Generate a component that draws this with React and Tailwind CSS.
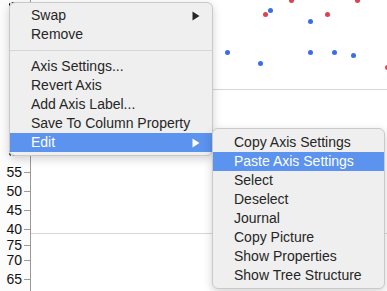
import React from 'react';

const dots = [
    { x: 291, y: 0, c: 'red' },
    { x: 265, y: 14, c: 'red' },
    { x: 270, y: 10, c: 'blue' },
    { x: 357, y: 0, c: 'red' },
    { x: 310, y: 21, c: 'blue' },
    { x: 327, y: 14, c: 'red' },
    { x: 227, y: 52, c: 'blue' },
    { x: 260, y: 63, c: 'blue' },
    { x: 310, y: 52, c: 'blue' },
    { x: 334, y: 52, c: 'blue' },
    { x: 353, y: 55, c: 'blue' },
    { x: 387, y: 67, c: 'red' },
];

const ticks = [
    { label: '55', y: 172 },
    { label: '50', y: 191 },
    { label: '45', y: 210 },
    { label: '40', y: 229 },
    { label: '75', y: 245 },
    { label: '70', y: 260 },
    { label: '65', y: 279 },
];

const Arrow = ({ color }) => (
    <svg width="8" height="10" viewBox="0 0 8 10" className="shrink-0">
        <path d="M0.5 0.5 L7.5 5 L0.5 9.5 Z" fill={color} />
    </svg>
);

const Row = ({ label, active, arrow }) => (
    <div className={`flex items-center justify-between h-[19px] pl-[21px] pr-[12px] ${active ? 'bg-[#5b93ee] text-white' : 'text-[#262626]'}`}>
        <span className="leading-[19px]">{label}</span>
        {arrow && <Arrow color={active ? '#ffffff' : '#262626'} />}
    </div>
);

export default function App() {
    return (
        <div className="relative w-[387px] h-[291px] overflow-hidden bg-white" style={{ fontFamily: '"Liberation Sans", Arial, sans-serif' }}>
            {/* graph background */}
            <div className="absolute inset-0 flex">
                <div className="w-[31px] h-full bg-[#fcfcfc] border-r border-[#9a9a9a]" />
                <div className="flex-1 relative">
                    <div className="absolute left-0 right-0 top-[89px] h-px bg-[#d6d6d6]" />
                    <div className="absolute left-0 right-0 top-[233px] h-px bg-[#d6d6d6]" />
                </div>
            </div>

            {ticks.map((t) => (
                <div key={t.label} className="absolute left-0 w-[31px] flex items-center" style={{ top: t.y - 8 }}>
                    <span className="w-[22px] text-right text-[14px] leading-[16px] text-[#111]">{t.label}</span>
                    <span className="ml-[2px] w-[7px] h-px bg-[#9a9a9a]" />
                </div>
            ))}

            {dots.map((d, i) => (
                <div
                    key={i}
                    className={`absolute w-[5px] h-[5px] rounded-full ${d.c === 'red' ? 'bg-[#e0414f]' : 'bg-[#3a6ee6]'}`}
                    style={{ left: d.x - 2.5, top: d.y - 2.5 }}
                />
            ))}

            <div className="absolute left-[9px] top-[2px] w-[100px] h-[154px] border border-dashed border-black rounded-[3px]" />

            {/* context menu */}
            <div className="absolute left-[9px] top-[2px] w-[204px] bg-[#efefef] border border-[#c9c9c9] rounded-[6px] pt-[3px] pb-[3px] text-[14px] shadow-[0_3px_10px_rgba(0,0,0,0.18)]">
                <Row label="Swap" arrow />
                <Row label="Remove" />
                <div className="h-[13px] flex items-center">
                    <div className="w-full h-px bg-[#d6d6d6]" />
                </div>
                <Row label="Axis Settings..." />
                <Row label="Revert Axis" />
                <Row label="Add Axis Label..." />
                <Row label="Save To Column Property" />
                <Row label="Edit" active arrow />
            </div>

            {/* submenu */}
            <div className="absolute left-[212px] top-[128px] w-[173px] bg-[#efefef] border border-[#c9c9c9] rounded-[6px] pt-[4px] pb-[3px] text-[14px] shadow-[0_3px_10px_rgba(0,0,0,0.18)]">
                <Row label="Copy Axis Settings" />
                <Row label="Paste Axis Settings" active />
                <Row label="Select" />
                <Row label="Deselect" />
                <Row label="Journal" />
                <Row label="Copy Picture" />
                <Row label="Show Properties" />
                <Row label="Show Tree Structure" />
            </div>
        </div>
    );
}
